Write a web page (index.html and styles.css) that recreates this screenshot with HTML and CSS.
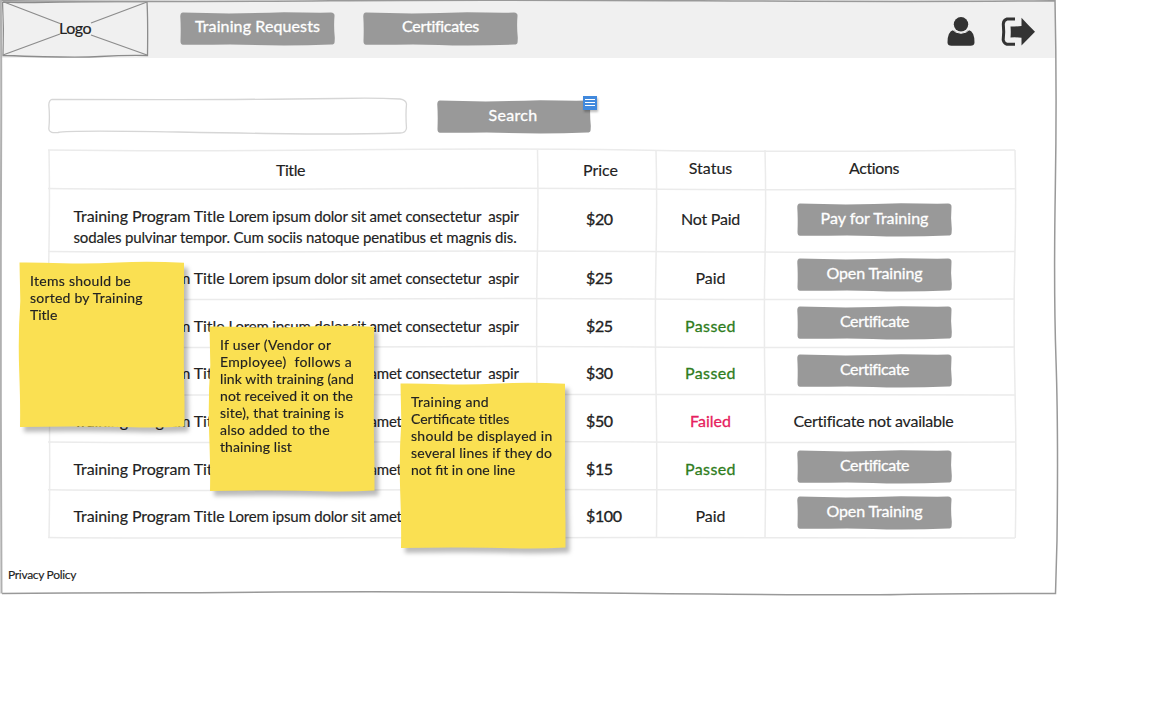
FILE: index.html
```html
<!DOCTYPE html>
<html lang="en">
<head>
<meta charset="utf-8">
<title>Training Requests</title>
<link rel="stylesheet" href="styles.css">
</head>
<body>
<svg class="defs" aria-hidden="true">
  <symbol id="btn" viewBox="0 0 155 34" preserveAspectRatio="none"><path d="M3 .5 Q26 1.200 49 1.600 Q78 1 104 .2 Q130 .8 151 .6 Q154.800 1 154.500 4 Q153.600 14 154.800 26 L154.600 30 Q154.500 32.600 151 32.600 Q128 33.500 104 33.600 Q75 33 50 32.400 Q25 33 3 32.800 Q.4 32.500 .5 29 Q1 15 .3 5 Q0 .6 3 .5Z" fill="#999"/></symbol>
  <symbol id="note" viewBox="0 0 168 167" preserveAspectRatio="none"><path d="M1.500 1.500 Q20 1.300 45 2.200 T100 1.500 T166 1.800 L166 70 Q165.500 100 166.500 140 L166.500 165.500 Q140 167 115 166.300 T60 165.500 T2 166 Q2.500 145 1.200 110 T2.300 40Z" fill="#fae052"/></symbol>
</svg>
<div class="page">
  <header class="top">
    <div class="logo">
      <svg class="art" viewBox="0 0 148 58"><g fill="none" stroke="#8c8c8c" stroke-width="1.300"><path d="M3 2 Q30 3 60 2.200 T147 1.700 Q148 20 147.500 55.500 Q125 55 100 56.500 T3 55.500 Q4 30 2.500 2"/><path d="M4 2 60 23.500M91 23 147 2M3 55 60 34M91 35 147 55"/></g></svg>
      <span class="logo-text">Logo</span>
    </div>
    <nav class="nav">
      <a class="btn"><svg class="art"><use href="#btn"/></svg><span class="t-req">Training Requests</span></a>
      <a class="btn"><svg class="art"><use href="#btn"/></svg><span class="t-certs">Certificates</span></a>
    </nav>
    <div class="icons">
      <svg width="28" height="30" viewBox="0 0 28 30"><g fill="#333"><ellipse cx="14" cy="7.300" rx="7.200" ry="7.300"/><path d="M6.500 13Q14 19.500 21.500 13Q27.600 14.500 27.500 25.500Q27.300 28.800 23.500 28.800H4.500Q.7 28.800.5 25.500Q.5 14.500 6.500 13Z"/></g><path d="M5.800 12.700Q8 15.800 14 16.300Q20 15.800 22.200 12.700" fill="none" stroke="#f0f0f0"/></svg>
      <svg width="34" height="30" viewBox="0 0 34 30"><path d="M14 2H6Q2.500 3 2.300 7Q3.200 15 2.200 23Q3 26.500 6 27.300H14" fill="none" stroke="#333" stroke-width="3"/><path d="M20.500 .8Q27 8 34 14.800Q27 22 20.500 28.500V20.700Q14 20 9.500 20.500Q10 15 9.500 9.500Q15 9.500 20.500 9Z" fill="#333"/></svg>
    </div>
  </header>
  <main class="main">
    <div class="search">
      <div class="field"><svg class="art" viewBox="0 0 360 38"><path d="M4 2.300Q60 2.500 120 2.600T290 1.500Q325 .5 352 2Q358 3 358.500 7Q357.500 18 358.500 31Q358 36 352 36Q320 37 280 37T130 35T10 35.500Q1 36.500 .8 32Q2 20 .8 8Q1 3 4 2.300Z" fill="#fff" stroke="#d6d6d6" stroke-width="1.300"/></svg></div>
      <a class="btn"><svg class="art"><use href="#btn"/></svg><span class="t-search">Search</span>
        <svg class="marker" width="14" height="14" viewBox="0 0 14 14"><path fill="#4189dd" d="M0 0h14v14H0z"/><path d="M2 3.500h10M2 6.500h10M2 9.500h10" stroke="#fff"/></svg></a>
    </div>
    <div class="table">
      <svg class="art" viewBox="0 0 968 390"><g fill="none" stroke="#ebebeb" stroke-width="1.500"><path d="M0 1Q120 2.500 300 .8T600 1.300T967 1M0 39.500Q120 41 300 39.800T600 40T967 39.800M0 102.500Q120 103.500 300 102.500T600 102.600T967 102.500M0 150Q120 151 300 150T600 150T967 150M0 198Q120 199 300 198T600 198T967 198M0 245.700Q120 246.500 300 245.700T600 245.400T967 246M0 293Q120 294 300 293T600 293T967 293M0 340.700Q120 342 300 341T600 340.700T967 341M0 388.500Q120 389.500 300 388.800T600 388.600T967 389"/><path d="M1 1Q2 50 .8 110T1 240T1 389M489.500 1Q490.500 50 489.300 110T489 240T489.500 389M608 1Q609.300 50 608 110T608 240T608.500 389M717 1Q718.300 50 717 110T717 240T717 389M967 1Q968.300 50 966.800 110T967 240T967.300 389"/></g></svg>
      <div class="row head"><span class="c-title"><span class="h-title">Title</span></span><span class="cell"><span class="h-price">Price</span></span><span class="cell raised"><span class="h-status">Status</span></span><span class="cell raised"><span class="h-actions">Actions</span></span></div>
      <div class="row tall"><span class="title"><span class="tp">Training Program Title</span><span class="lorem">Lorem ipsum dolor sit amet consectetur&nbsp; aspir</span><br><span class="sodales">sodales pulvinar tempor. Cum sociis natoque penatibus et magnis dis.</span></span><span class="cell"><span class="price">$20</span></span><span class="cell"><span class="notpaid">Not Paid</span></span><span class="act"><a class="btn"><svg class="art"><use href="#btn"/></svg><span class="t-pay">Pay for Training</span></a></span></div>
      <div class="row"><span class="title"><span class="tp">Training Program Title</span><span class="lorem">Lorem ipsum dolor sit amet consectetur&nbsp; aspir</span></span><span class="cell"><span class="price">$25</span></span><span class="cell"><span class="paid">Paid</span></span><span class="act"><a class="btn"><svg class="art"><use href="#btn"/></svg><span class="t-open">Open Training</span></a></span></div>
      <div class="row"><span class="title"><span class="tp">Training Program Title</span><span class="lorem">Lorem ipsum dolor sit amet consectetur&nbsp; aspir</span></span><span class="cell"><span class="price">$25</span></span><span class="cell"><span class="passed">Passed</span></span><span class="act low"><a class="btn"><svg class="art"><use href="#btn"/></svg><span class="t-cert">Certificate</span></a></span></div>
      <div class="row"><span class="title"><span class="tp">Training Program Title</span><span class="lorem">Lorem ipsum dolor sit amet consectetur&nbsp; aspir</span></span><span class="cell"><span class="price">$30</span></span><span class="cell"><span class="passed">Passed</span></span><span class="act low"><a class="btn"><svg class="art"><use href="#btn"/></svg><span class="t-cert">Certificate</span></a></span></div>
      <div class="row"><span class="title"><span class="tp">Training Program Title</span><span class="lorem">Lorem ipsum dolor sit amet consectetur&nbsp; aspir</span></span><span class="cell"><span class="price">$50</span></span><span class="cell"><span class="failed">Failed</span></span><span class="cell none"><span class="t-none">Certificate not available</span></span></div>
      <div class="row"><span class="title"><span class="tp">Training Program Title</span><span class="lorem">Lorem ipsum dolor sit amet consectetur&nbsp; aspir</span></span><span class="cell"><span class="price">$15</span></span><span class="cell"><span class="passed">Passed</span></span><span class="act lower"><a class="btn"><svg class="art"><use href="#btn"/></svg><span class="t-cert">Certificate</span></a></span></div>
      <div class="row"><span class="title"><span class="tp">Training Program Title</span><span class="lorem">Lorem ipsum dolor sit amet consectetur&nbsp; aspir</span></span><span class="cell"><span class="price">$100</span></span><span class="cell"><span class="paid">Paid</span></span><span class="act"><a class="btn"><svg class="art"><use href="#btn"/></svg><span class="t-open">Open Training</span></a></span></div>
    </div>
  </main>
  <footer class="foot"><span class="privacy">Privacy Policy</span></footer>
  <svg class="frame" viewBox="0 0 1060 597"><g fill="none" stroke="#999" stroke-width="1.500"><path d="M0 .7Q200 2 330 .8T700 .8T1055 .7Q1057 90 1055.300 190T1056 360T1057 540L1055.500 593.500Q960 593.500 900 594.500T600 593T200 592.800Q80 592.500 2 593.500"/><path d="M1.500 593.500Q1 500 .8 400T.8 250T1.200 130T.8 0" stroke="#b0b0b0" stroke-width="2"/></g></svg>
  <div class="note n1"><svg class="art"><use href="#note"/></svg><span class="s28">Items should be</span><br><span class="s23">sorted by Training</span><br><span>Title</span></div>
  <div class="note n2"><svg class="art"><use href="#note"/></svg><span class="s28">If user (Vendor or</span><br><span class="s34">Employee)&nbsp; follows a</span><br><span class="s09">link with training (and</span><br><span class="s09">not received it on the</span><br><span class="s18">site), that training is</span><br><span class="s23">also added to the</span><br><span class="s09">thaining list</span></div>
  <div class="note n3"><svg class="art"><use href="#note"/></svg><span class="s28">Training and</span><br><span>Certificate titles</span><br><span class="s28">should be displayed in</span><br><span class="s23">several lines if they do</span><br><span>not fit in one line</span></div>
</div>
</body>
</html>
```
FILE: styles.css
```css
* { box-sizing: border-box; }
body { margin: 0; background: #fff; color: #222; font: 16px/20px Lato, "Open Sans", sans-serif; -webkit-text-stroke: .15px; overflow: hidden; }
.defs { position: absolute; width: 0; height: 0; }
.page { position: relative; width: 1060px; height: 597px; }
.art { position: absolute; left: 0; top: 0; width: 100%; height: 100%; overflow: visible; }
.frame { position: absolute; left: 0; top: 0; width: 1060px; height: 597px; pointer-events: none; }
.top { display: flex; width: 1056px; height: 58px; background: #f0f0f0; }
.logo { position: relative; width: 148px; height: 58px; padding: 18px 0 0 2px; text-align: center; }
.logo span, .btn span { position: relative; }
.nav { display: flex; gap: 28px; padding: 12px 0 0 32px; }
.btn { position: relative; display: block; width: 155px; height: 34px; padding-top: 5px; color: #fff; text-align: center; white-space: nowrap; -webkit-text-stroke: .3px #fff; }
.icons { display: flex; gap: 26px; margin-left: auto; padding: 17px 21px 0 0; }
.main { padding: 39px 0 0 48px; }
.search { display: flex; gap: 29px; height: 52px; }
.field { position: relative; width: 360px; height: 38px; }
.search .btn { margin-top: 3px; width: 154px; padding: 5px 2px 0 0; }
.nav .btn { padding-top: 4px; }
.marker { position: absolute; right: -6px; top: -4px; filter: drop-shadow(1px 2px 1px #0004); }
.table { position: relative; width: 968px; height: 390px; }

/* Rows */
.row { position: relative; display: grid; grid-template-columns: 490px 118px 109px 251px; height: 47.700px; }
.head { height: 40px; }
.tall { height: 62.500px; }
.row > span { white-space: nowrap; padding-top: 16.500px; }
.row > .c-title { padding: 11px 5px 0 0; text-align: center; }
.row > .cell { text-align: center; }
.row > .cell:nth-child(2) { text-align: left; padding-left: 48px; }
.head > .cell { padding-top: 11px; }
.head > .cell:nth-child(2) { padding-left: 45px; }
.head > .raised { padding-top: 9px; }
.head > .cell:nth-child(4) { padding-right: 33px; }
.row > .none { padding-right: 34px; }
.row > .title { padding-left: 25.500px; }
.tall > .title { padding-top: 17px; line-height: 19.500px; }
.tall > .cell { padding-top: 20px; }
.row > .act { padding: 6px 0 0 32px; }
.row > .low { padding-top: 7px; }
.row > .lower { padding-top: 8px; }
.tall > .act { padding-top: 14px; }

/* Text tracking */
.logo-text { letter-spacing: -.48px; }
.t-req { letter-spacing: .11px; }
.t-certs { letter-spacing: -.28px; }
.t-search { letter-spacing: .32px; }
.t-open { letter-spacing: -.14px; }
.t-cert { letter-spacing: -.4px; }
.t-none { letter-spacing: -.23px; }
.h-title { letter-spacing: -.44px; }
.h-actions { letter-spacing: -.36px; }
.tp { display: inline-block; margin-right: 4px; letter-spacing: -.1px; }
.lorem, .sodales { font-size: 15px; letter-spacing: -.19px; }
.sodales { letter-spacing: -.15px; }
.price { letter-spacing: -.4px; -webkit-text-stroke: .35px; }
.notpaid { letter-spacing: -.23px; }
.passed { color: #2f7d1d; letter-spacing: .4px; -webkit-text-stroke: .3px; }
.failed { color: #e6215e; -webkit-text-stroke: .3px; }
.privacy { letter-spacing: -.31px; }
.s09 { letter-spacing: .09px; }
.s18 { letter-spacing: .18px; }
.s23 { letter-spacing: .22px; }
.s28 { letter-spacing: .28px; }
.s34 { letter-spacing: .34px; }

.foot { padding: 28px 0 0 8px; font-size: 12px; line-height: 16px; }

/* Sticky notes lie over the page */
.note { position: absolute; width: 168px; height: 167px; padding: 11px 0 0 12px; font-size: 14px; line-height: 17px; white-space: nowrap; filter: drop-shadow(4px 5px 2px #0004); }
.note span { position: relative; }
.n1 { left: 18px; top: 261px; }
.n2 { left: 208px; top: 325px; }
.n3 { left: 399px; top: 382px; }
```
